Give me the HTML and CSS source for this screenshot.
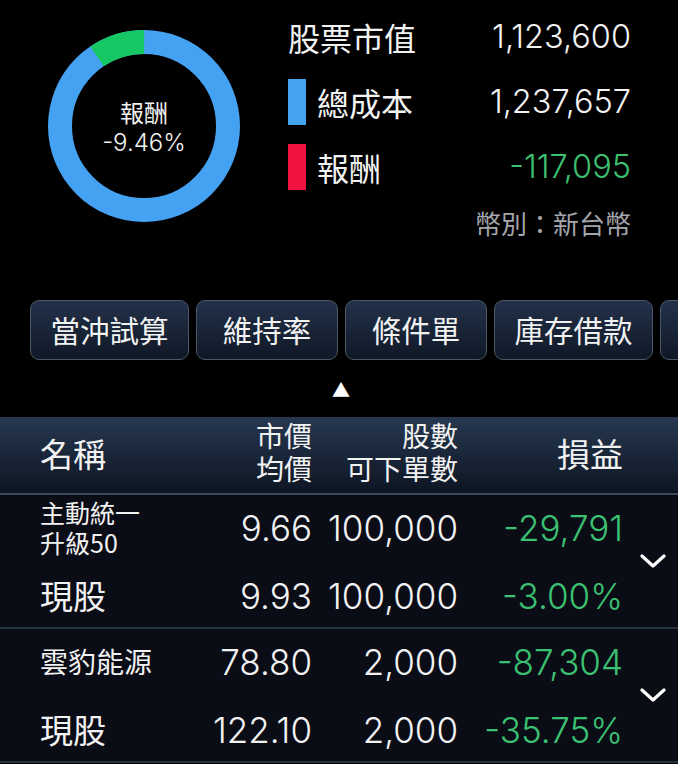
FILE: index.html
```html
<!DOCTYPE html>
<html lang="zh-Hant">
<head>
    <meta charset="UTF-8">
    <meta name="viewport" content="width=device-width, initial-scale=1.0">
    <title>庫存損益</title>
    <link rel="stylesheet" href="styles.css">
</head>
<body>

    <!-- Summary: donut chart and totals -->
    <section class="summary">
        <div class="donut">
            <svg class="donut-chart" width="200" height="200" viewBox="0 0 200 200">
                <circle cx="100" cy="100" r="84" fill="none" stroke="#45a1f2" stroke-width="24"/>
                <circle cx="100" cy="100" r="84" fill="none" stroke="#16c864" stroke-width="24"
                        stroke-dasharray="49.9 527.8" transform="rotate(-124 100 100)"/>
            </svg>
            <div class="donut-label">
                <span>報酬</span>
                <span class="num">-9.46%</span>
            </div>
        </div>

        <div class="totals">
            <div class="total-row">
                <span class="total-name">股票市值</span>
                <span class="num">1,123,600</span>
            </div>
            <div class="total-row">
                <span class="total-name"><i class="swatch swatch-blue"></i>總成本</span>
                <span class="num">1,237,657</span>
            </div>
            <div class="total-row">
                <span class="total-name"><i class="swatch swatch-red"></i>報酬</span>
                <span class="num down">-117,095</span>
            </div>
            <div class="currency">幣別：新台幣</div>
        </div>
    </section>

    <!-- Tool buttons -->
    <nav class="tools">
        <button class="tool-btn wide">當沖試算</button>
        <button class="tool-btn">維持率</button>
        <button class="tool-btn">條件單</button>
        <button class="tool-btn wide">庫存借款</button>
        <button class="tool-btn" aria-label="更多"></button>
    </nav>
    <div class="collapse">▲</div>

    <!-- Holdings table -->
    <section class="holdings">
        <div class="table-head">
            <div class="head-name">名稱</div>
            <div class="head-col">
                <span>市價</span>
                <span>均價</span>
            </div>
            <div class="head-col">
                <span>股數</span>
                <span>可下單數</span>
            </div>
            <div class="head-pl">損益</div>
        </div>

        <div class="stock-row">
            <div class="stock-name small">主動統一<br>升級50</div>
            <div class="cell num">9.66</div>
            <div class="cell num">100,000</div>
            <div class="cell num down">-29,791</div>
            <div class="expand">
                <svg width="26" height="16" viewBox="0 0 26 16"><polyline points="2,3 13,13 24,3" fill="none" stroke="#fff" stroke-width="3.2" stroke-linecap="round" stroke-linejoin="round"/></svg>
            </div>
            <div class="stock-type">現股</div>
            <div class="cell num">9.93</div>
            <div class="cell num">100,000</div>
            <div class="cell num down">-3.00%</div>
        </div>

        <div class="stock-row">
            <div class="stock-name">雲豹能源</div>
            <div class="cell num">78.80</div>
            <div class="cell num">2,000</div>
            <div class="cell num down">-87,304</div>
            <div class="expand">
                <svg width="26" height="16" viewBox="0 0 26 16"><polyline points="2,3 13,13 24,3" fill="none" stroke="#fff" stroke-width="3.2" stroke-linecap="round" stroke-linejoin="round"/></svg>
            </div>
            <div class="stock-type">現股</div>
            <div class="cell num">122.10</div>
            <div class="cell num">2,000</div>
            <div class="cell num down">-35.75%</div>
        </div>
    </section>

</body>
</html>
```

FILE: styles.css
```css
/* Base */
body {
    margin: 0;
    width: 678px;
    height: 764px;
    overflow: hidden;
    background-color: #000;
    color: #f2f2f2;
    font-family: "Noto Sans CJK TC", "Noto Sans", sans-serif;
}

.num {
    font-family: Inter, Roboto, sans-serif;
    font-weight: 350;
}

.down {
    color: #3cc071;
}

/* Summary block */
.summary {
    display: flex;
    height: 300px;
}

.donut {
    display: grid;
    place-items: center;
    width: 200px;
    height: 200px;
    margin: 26px 0 0 44px;
}

.donut-chart,
.donut-label {
    grid-area: 1 / 1;
}

.donut-label {
    display: flex;
    flex-direction: column;
    align-items: center;
    font-size: 24px;
    line-height: 31px;
    margin-top: 2px;
}

.totals {
    display: grid;
    grid-template-columns: 1fr auto;
    width: 343px;
    margin-left: 44px;
    align-content: start;
    padding-top: 16px;
}

.total-row {
    display: contents;
}

.total-row > span {
    height: 65px;
    display: flex;
    align-items: flex-start;
    font-size: 32px;
    line-height: 42px;
}

.total-row .num {
    justify-content: flex-end;
    font-size: 32.5px;
}

.total-name {
    gap: 11px;
}

.swatch {
    display: inline-block;
    width: 18px;
    height: 46px;
    margin-top: -2px;
}

.swatch-blue {
    background-color: #45a1f2;
}

.swatch-red {
    background-color: #f2123f;
}

.currency {
    grid-column: 1 / -1;
    text-align: right;
    color: #a3a6ab;
    font-size: 26px;
    line-height: 32px;
    margin-top: -4px;
}

/* Tool buttons */
.tools {
    display: flex;
    gap: 7px;
    padding-left: 30px;
    overflow: hidden;
}

.tool-btn {
    flex: 0 0 142px;
    height: 60px;
    padding: 0;
    border: 1.5px solid #4b5766;
    border-radius: 9px;
    background: linear-gradient(#233149, #0f1826);
    color: #f2f2f2;
    font-family: "Noto Sans CJK TC", sans-serif;
    font-size: 29.5px;
    line-height: 1;
}

.tool-btn.wide {
    flex-basis: 159px;
}

.collapse {
    text-align: center;
    font-size: 18px;
    line-height: 18px;
    padding: 20px 0 19px;
    margin-left: 4px;
    color: #fff;
}

/* Holdings table */
.holdings {
    display: flex;
    flex-direction: column;
}

.table-head {
    display: grid;
    grid-template-columns: 200px 112px 146px 165px;
    align-items: center;
    height: 76px;
    background: linear-gradient(#263850, #0d1522);
    border-bottom: 2px solid #3c4a5c;
}

.head-name {
    padding-left: 40px;
    font-size: 33px;
    margin-top: -4px;
}

.head-pl {
    text-align: right;
    font-size: 33px;
    margin-top: -4px;
}

.head-col {
    display: flex;
    flex-direction: column;
    align-items: flex-end;
    font-size: 28px;
    line-height: 33px;
    margin-top: -6px;
}

.stock-row {
    display: grid;
    grid-template-columns: 200px 112px 146px 165px 55px;
    grid-template-rows: 66px 66px;
    align-items: center;
    background-color: #0a0c16;
    border-bottom: 2px solid #263240;
}

.stock-name {
    padding-left: 40px;
    font-size: 28px;
    line-height: 30px;
    margin-top: -2px;
}

.stock-name.small {
    font-size: 25px;
    line-height: 30px;
}

.stock-type {
    padding-left: 40px;
    font-size: 33px;
    margin-top: 2px;
}

.cell {
    text-align: right;
    font-size: 35px;
    white-space: nowrap;
}

.cell:nth-child(n+7) {
    margin-top: 4px;
}

.expand {
    grid-column: 5;
    grid-row: 1 / 3;
    display: flex;
    justify-content: center;
    padding-left: 4px;
}
```
